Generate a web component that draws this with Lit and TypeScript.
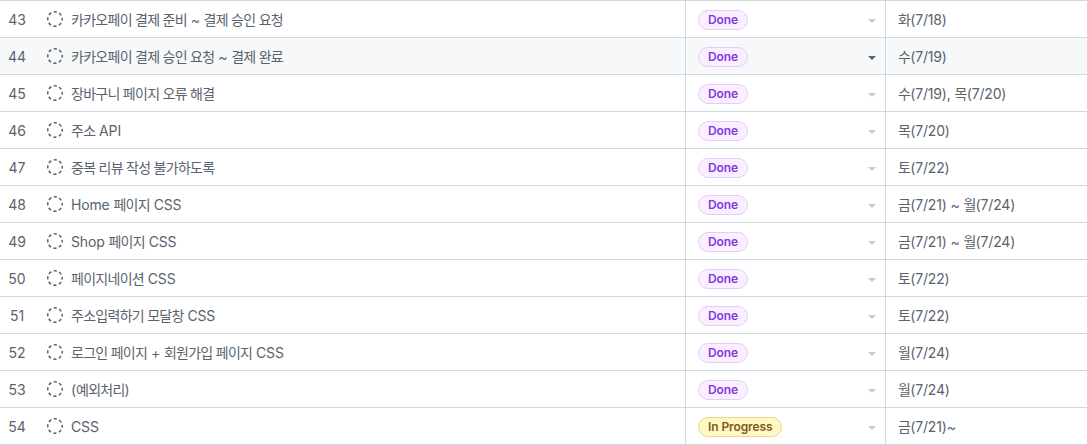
import { LitElement, html, css } from "lit";
import { customElement } from "lit/decorators.js";

type Row = [number, string, string, string];
const rows: Row[] = [
  [43, "카카오페이 결제 준비 ~ 결제 승인 요청", "Done", "화(7/18)"],
  [44, "카카오페이 결제 승인 요청 ~ 결제 완료", "Done", "수(7/19)"],
  [45, "장바구니 페이지 오류 해결", "Done", "수(7/19), 목(7/20)"],
  [46, "주소 API", "Done", "목(7/20)"],
  [47, "중복 리뷰 작성 불가하도록", "Done", "토(7/22)"],
  [48, "Home 페이지 CSS", "Done", "금(7/21) ~ 월(7/24)"],
  [49, "Shop 페이지 CSS", "Done", "금(7/21) ~ 월(7/24)"],
  [50, "페이지네이션 CSS", "Done", "토(7/22)"],
  [51, "주소입력하기 모달창 CSS", "Done", "토(7/22)"],
  [52, "로그인 페이지 + 회원가입 페이지 CSS", "Done", "월(7/24)"],
  [53, "(예외처리)", "Done", "월(7/24)"],
  [54, "CSS", "In Progress", "금(7/21)~"],
];

const ko = (s: string) =>
  s.split(/([\uac00-\ud7a3]+(?:\s+[\uac00-\ud7a3]+)*)/).map((part, i) =>
    i % 2 ? html`<span class="ko">${part}</span>` : part
  );

@customElement("app-root")
export class AppRoot extends LitElement {
  static styles = css`
    :host {
      display: block;
      width: 1087px;
      height: 445px;
      overflow: hidden;
      background: #fff;
      font-family: Inter, "Noto Sans CJK KR", "Noto Sans", sans-serif;
      font-size: 14px;
      color: #59636e;
    }
    .table {
      border-top: 1px solid #d1d9e0;
    }
    .row {
      display: grid;
      grid-template-columns: 685px 1fr 201px;
      height: 37px;
      box-sizing: border-box;
      border-bottom: 1px solid #d1d9e0;
    }
    .row.hover {
      background: #f6f8fa;
    }
    .title {
      display: flex;
      align-items: center;
      min-width: 0;
    }
    .num {
      width: 34px;
      text-align: center;
      font-size: 14px;
    }
    .icon {
      width: 16px;
      height: 16px;
      margin-left: 13px;
      flex: none;
    }
    .text {
      margin-left: 8px;
      white-space: nowrap;
      letter-spacing: -0.15px;
    }
    .ko {
      letter-spacing: -0.72px;
    }
    .status {
      display: flex;
      align-items: center;
      justify-content: space-between;
      padding: 2px 9px 0 12px;
      border-left: 1px solid #d1d9e0;
      border-right: 1px solid #d1d9e0;
    }
    .pill {
      box-sizing: border-box;
      height: 20px;
      display: inline-flex;
      align-items: center;
      padding: 0 9px;
      border: 1px solid;
      border-radius: 10px;
      font-size: 12px;
      font-weight: 600;
      line-height: 18px;
      letter-spacing: -0.1px;
    }
    .pill.done {
      background: #fbefff;
      border-color: #e5ccff;
      color: #8039df;
    }
    .pill.progress {
      background: #fff8c5;
      border-color: #e8d78a;
      color: #805a16;
    }
    .caret {
      width: 8px;
      height: 4px;
      display: block;
      fill: #c4cad1;
      margin-top: 2px;
    }
    .row.hover .caret {
      fill: #59636e;
    }
    .date {
      display: flex;
      align-items: center;
      padding-left: 12px;
      white-space: pre;
      letter-spacing: -0.15px;
    }
  `;

  render() {
    return html`<div class="table">
      ${rows.map(
        ([n, title, status, date]) => html`<div class="row ${n === 44 ? "hover" : ""}">
          <div class="title">
            <span class="num">${n}</span>
            <svg class="icon" viewBox="0 0 16 16" fill="none">
              <circle cx="8" cy="8" r="7.25" stroke="#59636e" stroke-width="1.5" stroke-dasharray="3.2 2.5" stroke-dashoffset="1.6"></circle>
            </svg>
            <span class="text">${ko(title)}</span>
          </div>
          <div class="status">
            <span class="pill ${status === "Done" ? "done" : "progress"}">${status}</span>
            <svg class="caret" viewBox="0 0 8 4"><path d="M0 0h8L4 4z"></path></svg>
          </div>
          <div class="date"><span>${ko(date)}</span></div>
        </div>`
      )}
    </div>`;
  }
}
